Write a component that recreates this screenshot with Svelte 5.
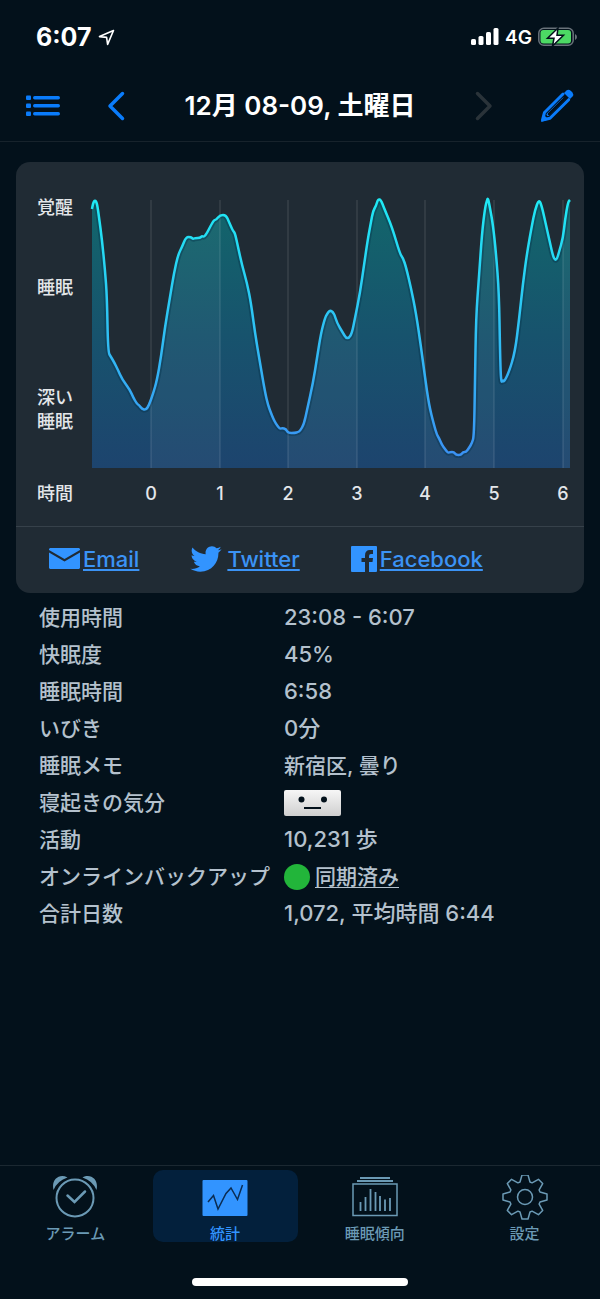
<script lang="ts">
  type Point = [number, number];

  // Sleep depth over the night, in plot units (0 = awake, 268 = bottom of plot)
  const samples: Point[] = [
    [0, 9], [1, 3], [3, 0], [5, 3], [7, 17], [10, 40], [13, 70], [15, 97], [16, 152], [19, 157],
    [22, 162], [26, 170], [30, 179], [38, 190], [41, 197], [45, 204], [47, 205], [50, 209],
    [54, 210], [57, 205], [61, 194], [65, 180], [69, 157], [73, 127], [78, 97], [82, 73], [86, 55],
    [90, 47], [94, 37], [99, 37], [101, 39], [103, 38], [108, 38], [110, 36], [112, 37], [115, 33],
    [118, 27], [122, 20], [124, 20], [128, 15], [134, 15], [137, 22], [141, 31], [143, 33],
    [146, 47], [150, 65], [155, 83], [159, 103], [163, 133], [168, 163], [173, 192], [176, 205],
    [179, 213], [181, 218], [184, 224], [188, 229], [190, 228], [194, 229], [196, 233], [203, 233],
    [206, 232], [208, 231], [212, 224], [215, 210], [221, 183], [225, 158], [229, 133], [233, 118],
    [235, 114], [238, 110], [242, 113], [245, 123], [251, 133], [254, 138], [257, 138], [260, 133],
    [263, 118], [268, 93], [272, 65], [276, 38], [279, 22], [281, 11], [284, 6], [286, -1],
    [289, 0], [292, 8], [300, 27], [308, 54], [311, 58], [314, 67], [319, 88], [324, 113],
    [329, 147], [333, 177], [337, 205], [342, 225], [345, 235], [347, 238], [350, 245], [353, 249],
    [356, 253], [358, 252], [362, 252], [364, 255], [369, 255], [371, 252], [374, 252], [377, 248],
    [380, 243], [382, 236], [383, 183], [384, 117], [387, 77], [390, 33], [393, 8], [395, 0],
    [396, -2], [398, 8], [401, 25], [404, 53], [407, 93], [408, 150], [409, 183], [411, 180],
    [412, 182], [417, 172], [423, 152], [427, 120], [431, 83], [435, 53], [440, 25], [443, 10],
    [447, -1], [450, 7], [454, 25], [458, 43], [461, 56], [463, 60], [465, 59], [467, 52],
    [471, 38], [473, 20], [476, 2], [478, 0],
  ];

  const plotHeight = 268;
  const plotWidth = 478;
  const hours = [0, 1, 2, 3, 4, 5, 6].map((hour) => ({ hour, x: Math.round(59 + hour * 68.6) }));

  // Quadratic segments through the midpoints, so the curve never overshoots a sample
  function smooth(points: Point[]) {
    let d = `M${points[0].join(" ")}`;
    for (let i = 1; i < points.length - 1; i++) {
      const [x, y] = points[i];
      const [nx, ny] = points[i + 1];
      d += `Q${x} ${y} ${(x + nx) / 2} ${(y + ny) / 2}`;
    }
    return d + `L${points[points.length - 1].join(" ")}`;
  }

  const linePath = smooth(samples);
  const areaPath = `${linePath}V${plotHeight}H0Z`;

  // Every other hour gets a lighter band
  const bands = hours
    .filter(({ hour }) => hour % 2 === 0)
    .map(({ hour, x }) => ({ x, width: (hours[hour + 1]?.x ?? plotWidth) - x }));

  const yLabels = [
    { text: "覚醒", y: 45 },
    { text: "睡眠", y: 125 },
    { text: "深い", y: 235 },
    { text: "睡眠", y: 259 },
    { text: "時間", y: 331 },
  ];

  const stats = [
    { label: "使用時間", value: "23:08 - 6:07" },
    { label: "快眠度", value: "45%" },
    { label: "睡眠時間", value: "6:58" },
    { label: "いびき", value: "0分" },
    { label: "睡眠メモ", value: "新宿区, 曇り", kind: "memo" },
    { label: "寝起きの気分", kind: "mood" },
    { label: "活動", value: "10,231 歩" },
    { label: "オンラインバックアップ", value: "同期済み", kind: "sync" },
    { label: "合計日数", value: "1,072, 平均時間 6:44" },
  ];

  const tabs = [
    { id: "alarm", label: "アラーム" },
    { id: "stats", label: "統計" },
    { id: "trends", label: "睡眠傾向" },
    { id: "settings", label: "設定" },
  ];

  let activeTab = $state("stats");

  // One tooth, rotated eight times around the hub
  const tooth: Point[] = [[-5, -15], [-3, -22], [3, -22], [5, -15]];
  const gearPoints = Array.from({ length: 8 }, (_, i) => {
    const a = (i * Math.PI) / 4;
    return tooth.map(([x, y]) => {
      const rx = x * Math.cos(a) - y * Math.sin(a);
      const ry = x * Math.sin(a) + y * Math.cos(a);
      return `${rx.toFixed(2)},${ry.toFixed(2)}`;
    });
  })
    .flat()
    .join(" ");
</script>

<div class="screen">
  <div class="status-bar">
    <div class="status-group">
      <span class="clock">6:07</span>
      <svg width="17" height="17" viewBox="0 0 17 17" fill="none" stroke="#fff" stroke-width="1.6" stroke-linejoin="round">
        <path d="M15.5 1.5L1.5 7.6L8.6 8.4L9.6 15.4Z" />
      </svg>
    </div>
    <div class="status-group">
      <svg width="28" height="18" viewBox="0 0 28 18" fill="#fff">
        <rect x="0" y="11" width="5" height="6" rx="1.5" />
        <rect x="7.5" y="8" width="5" height="9" rx="1.5" />
        <rect x="15" y="4" width="5" height="13" rx="1.5" />
        <rect x="22.5" y="0" width="5" height="17" rx="1.5" />
      </svg>
      <span class="network">4G</span>
      <svg width="39" height="20" viewBox="0 0 39 20">
        <rect x="0.8" y="1.3" width="34.4" height="17" rx="5" fill="none" stroke="#69727a" stroke-width="1.5" />
        <path d="M37 7q2 1 2 3t-2 3z" fill="#69727a" />
        <rect x="2.5" y="3" width="30.5" height="13.5" rx="3" fill="#4cd964" />
        <path d="M20 1L9.5 11.2H16L14.5 19L25.500 8.300H19Z" fill="#fff" stroke="#03111b" stroke-width="1.5" />
      </svg>
    </div>
  </div>

  <header class="nav-bar">
    <button aria-label="一覧">
      <svg width="34" height="22" viewBox="0 0 34 22" fill="#0a7cfb">
        {#each [1, 9, 17] as y}
          <rect x="0" y={y - 0.5} width="5" height="4.5" rx="1" />
          <rect x="7" y={y} width="27" height="3.5" rx="1.7" />
        {/each}
      </svg>
    </button>
    <button aria-label="前の日">
      <svg width="18" height="30" viewBox="0 0 18 30" fill="none" stroke="#0a7cfb" stroke-width="3.5" stroke-linecap="round" stroke-linejoin="round">
        <path d="M15.5 2.5L3 15L15.5 27.5" />
      </svg>
    </button>
    <h1>12月 08-09, 土曜日</h1>
    <button aria-label="次の日" disabled>
      <svg width="18" height="30" viewBox="0 0 18 30" fill="none" stroke="#2a3339" stroke-width="3.5" stroke-linecap="round" stroke-linejoin="round">
        <path d="M2.5 2.5L15 15L2.5 27.5" />
      </svg>
    </button>
    <button aria-label="編集">
      <svg width="34" height="34" viewBox="0 0 34 34">
        <path
          d="M23 5L4.500 23.500L2.500 31L10 29.300L28.700 10.700M8 25.500L23.500 10"
          fill="none"
          stroke="#0a7cfb"
          stroke-width="3"
          stroke-linecap="round"
          stroke-linejoin="round"
        />
        <path d="M9 25L25 9" stroke="#03111b" stroke-width="2.500" stroke-linecap="round" />
        <path d="M24 4L26.500 1.500Q28.500 0 31 2L32.500 3.500Q34 5.500 32.500 7.500L30 10Z" fill="#0a7cfb" />
        <path d="M1 33L3.500 25.500L8.500 30.500Z" fill="#0a7cfb" />
      </svg>
    </button>
  </header>

  <main>
    <section class="card">
      <svg class="chart" viewBox="0 0 568 364" role="img" aria-label="睡眠グラフ">
        <defs>
          <linearGradient id="line" gradientUnits="userSpaceOnUse" x1="0" y1="0" x2="0" y2={plotHeight}>
            <stop offset="0" stop-color="#1fe9f4" />
            <stop offset="0.5" stop-color="#2fc0f4" />
            <stop offset="1" stop-color="#3c8df4" />
          </linearGradient>
          <linearGradient id="area" gradientUnits="userSpaceOnUse" x1="0" y1="0" x2="0" y2={plotHeight}>
            <stop offset="0" stop-color="#12666b" />
            <stop offset="0.5" stop-color="#17536d" />
            <stop offset="1" stop-color="#1d446e" />
          </linearGradient>
          <clipPath id="under-curve">
            <path d={areaPath} />
          </clipPath>
        </defs>

        {#each yLabels as { text, y }}
          <text x="21" {y} dominant-baseline="central">{text}</text>
        {/each}

        <g transform="translate(76 38)">
          <path d={areaPath} fill="url(#area)" />
          <g clip-path="url(#under-curve)">
            {#each bands as { x, width }}
              <rect {x} y="0" {width} height={plotHeight} fill="#fff" fill-opacity="0.04" />
            {/each}
            <path class="shade" d={linePath} />
          </g>
          {#each hours as { hour, x }}
            <line x1={x} x2={x} y1="0" y2={plotHeight} />
            <text {x} y="293" text-anchor="middle" dominant-baseline="central">{hour}</text>
          {/each}
          <path class="curve" d={linePath} />
        </g>
      </svg>

      <div class="share">
        <a href="#email">
          <svg width="31" height="22" viewBox="0 0 31 22" fill="#3294ff">
            <path d="M1 0H30L31 1V2L15.5 11L0 2V1ZM0 4.5L15.5 13.5L31 4.5V20L30 21H1L0 20Z" />
          </svg>
          <span>Email</span>
        </a>
        <a class="twitter" href="#twitter">
          <svg width="32" height="26" viewBox="0 2 24 20" fill="#3294ff">
            <path
              d="M23.954 4.569c-.885.389-1.83.654-2.825.775 1.014-.611 1.794-1.574 2.163-2.723-.951.555-2.005.959-3.127 1.184-.896-.959-2.173-1.559-3.591-1.559-2.717 0-4.92 2.203-4.92 4.917 0 .39.045.765.127 1.124C7.691 8.094 4.066 6.13 1.64 3.161c-.427.722-.666 1.561-.666 2.475 0 1.71.87 3.213 2.188 4.096-.807-.026-1.566-.248-2.228-.616v.061c0 2.385 1.693 4.374 3.946 4.827-.413.111-.849.171-1.296.171-.314 0-.615-.03-.916-.086.631 1.953 2.445 3.377 4.604 3.417-1.68 1.319-3.809 2.105-6.102 2.105-.39 0-.779-.023-1.17-.067 2.189 1.394 4.768 2.209 7.557 2.209 9.054 0 13.999-7.496 13.999-13.986 0-.209 0-.42-.015-.63.961-.689 1.8-1.56 2.46-2.548l-.047-.02z"
            />
          </svg>
          <span>Twitter</span>
        </a>
        <a href="#facebook">
          <svg width="26" height="26" viewBox="0 0 26 26">
            <rect width="26" height="26" rx="1" fill="#3294ff" />
            <path d="M14 26V16H10.500V12H14V9.500Q14 4 19 4H22V8H20Q18 8 18 10V12H22L21.500 16H18V26Z" fill="#202b34" />
          </svg>
          <span>Facebook</span>
        </a>
      </div>
    </section>

    <dl class="stats">
      {#each stats as { label, value, kind }}
        <dt>{label}</dt>
        <dd class={kind}>
          {#if kind === "mood"}
            <svg width="57" height="26" viewBox="0 0 57 26" role="img" aria-label="普通">
              <defs>
                <linearGradient id="mood-face" x1="0" y1="0" x2="0" y2="1">
                  <stop offset="0" stop-color="#f6f6f6" />
                  <stop offset="1" stop-color="#cfcfcf" />
                </linearGradient>
              </defs>
              <rect width="57" height="26" rx="2" fill="url(#mood-face)" />
              <circle cx="17.5" cy="9.5" r="3" fill="#03111b" />
              <circle cx="40" cy="9.5" r="3" fill="#03111b" />
              <path d="M20 18H37" stroke="#03111b" stroke-width="2" />
            </svg>
          {:else if kind === "sync"}
            <span class="sync-dot"></span>
            <a href="#sync">{value}</a>
          {:else}
            {value}
          {/if}
        </dd>
      {/each}
    </dl>
  </main>

  <nav class="tab-bar">
    {#each tabs as { id, label }}
      <button class="tab" class:active={activeTab === id} onclick={() => (activeTab = id)}>
        <svg width="46" height="46" viewBox="0 0 46 46" fill="none" stroke="currentColor" stroke-width="1.5">
          {#if id === "alarm"}
            <circle cx="23" cy="23" r="18.500" stroke-width="2" />
            <path d="M15.500 20.500L22.500 27L33 16.500" stroke-width="2.500" stroke-linecap="round" />
            <path
              d="M1.500 15C-1 5 7-2 15.500 2.500A22.500 22.500 0 0 0 1.500 15ZM44.500 15C47 5 39-2 30.500 2.500A22.500 22.500 0 0 1 44.500 15Z"
              fill="currentColor"
              stroke="none"
            />
          {:else if id === "stats"}
            <rect x="0.500" y="5" width="45" height="36" rx="1" fill="currentColor" stroke="none" />
            <path d="M6 27L11.500 20.500L16 34L24 18.500L29 13L35.500 24.500L40.500 10" stroke="#0b2c52" />
          {:else if id === "trends"}
            <path d="M8 3H38M5 6H41" stroke-width="2" />
            <rect x="1" y="9" width="44" height="31.500" />
            <path d="M8.500 36V27M13.500 36V22M18.500 36V14M23.500 36V17M28 36V21M33 36V24.500M38 36V23" stroke-width="1.8" />
          {:else}
            <g transform="translate(23 22)">
              <polygon points={gearPoints} stroke-linejoin="round" />
              <circle r="7.5" />
            </g>
          {/if}
        </svg>
        <span>{label}</span>
      </button>
    {/each}
  </nav>
  <div class="home-indicator"></div>
</div>

<style>
  :global(body) {
    margin: 0;
    background: #03111b;
  }

  .screen {
    display: flex;
    flex-direction: column;
    box-sizing: border-box;
    min-height: 100vh;
    background: #03111b;
    color: #b4c1cd;
    font-family: Inter, "Noto Sans CJK JP", sans-serif;
    font-weight: 500;
  }

  svg {
    display: block;
    flex-shrink: 0;
  }

  /* Status bar */
  .status-bar {
    display: flex;
    justify-content: space-between;
    align-items: center;
    height: 72px;
    padding: 2px 23px 0 36px;
    box-sizing: border-box;
    color: #fff;
  }

  .status-group {
    display: flex;
    align-items: center;
    gap: 6px;
  }

  .clock {
    font-size: 25px;
    font-weight: 700;
  }

  .network {
    font-size: 19px;
    font-weight: 600;
  }

  /* Navigation bar */
  .nav-bar {
    display: flex;
    align-items: center;
    gap: 47px;
    height: 70px;
    padding: 0 26px 2px;
    box-sizing: border-box;
    border-bottom: 1px solid #17232c;
  }

  h1 {
    flex: 1;
    margin: 0;
    color: #fff;
    font-size: 26px;
    font-weight: 600;
    line-height: 32px;
    text-align: center;
    white-space: nowrap;
  }

  button {
    padding: 0;
    border: 0;
    background: none;
    font: inherit;
    cursor: pointer;
  }

  /* Card */
  main {
    flex: 1;
  }

  .card {
    margin: 20px 16px 0;
    border-radius: 14px;
    background: #202b34;
  }

  .chart {
    width: 100%;
  }

  .chart text {
    fill: #e3e6e9;
    font-size: 18px;
  }

  .chart line {
    stroke: #fff;
    stroke-opacity: 0.16;
  }

  .curve {
    fill: none;
    stroke: url(#line);
    stroke-width: 2.5;
    stroke-linejoin: round;
  }

  .shade {
    fill: none;
    stroke: #06324a;
    stroke-opacity: 0.4;
    stroke-width: 6;
  }

  .share {
    display: flex;
    align-items: center;
    gap: 51px;
    height: 67px;
    padding: 0 33px 2px;
    box-sizing: border-box;
    border-top: 1px solid #36414a;
  }

  .share a {
    display: flex;
    align-items: center;
    gap: 3px;
    color: #3b93f5;
    font-size: 22px;
    text-decoration: none;
  }

  .share .twitter {
    gap: 5px;
  }

  .share span {
    text-decoration: underline;
    text-decoration-thickness: 2px;
    text-underline-offset: 2px;
  }

  /* Stats list */
  .stats {
    display: grid;
    grid-template-columns: 245px 1fr;
    grid-auto-rows: 37px;
    align-items: center;
    margin: 6px 39px 0;
    line-height: 37px;
    white-space: nowrap;
  }

  dt {
    font-size: 21px;
  }

  dd {
    display: flex;
    align-items: center;
    margin: 0;
    font-size: 22px;
  }

  .memo,
  .sync {
    font-size: 21px;
  }

  dd a {
    color: inherit;
    text-decoration-thickness: 1px;
    text-underline-offset: 3px;
  }

  .sync-dot {
    width: 26px;
    height: 26px;
    margin-right: 5px;
    border-radius: 50%;
    background: #22b53a;
  }

  /* Tab bar */
  .tab-bar {
    display: grid;
    grid-template-columns: repeat(4, 1fr);
    gap: 5px;
    padding: 4px 3px 0;
    border-top: 1px solid #1b2831;
  }

  .tab {
    display: flex;
    flex-direction: column;
    align-items: center;
    height: 72px;
    padding-top: 5px;
    border-radius: 10px;
    color: #6b9ab5;
    font-size: 15px;
    line-height: 20px;
  }

  .tab span {
    margin-top: 3px;
  }

  .tab.active {
    background: #03203c;
    color: #3294ff;
  }

  .home-indicator {
    width: 36%;
    height: 8px;
    margin: 36px auto 13px;
    border-radius: 4px;
    background: #fff;
  }
</style>
